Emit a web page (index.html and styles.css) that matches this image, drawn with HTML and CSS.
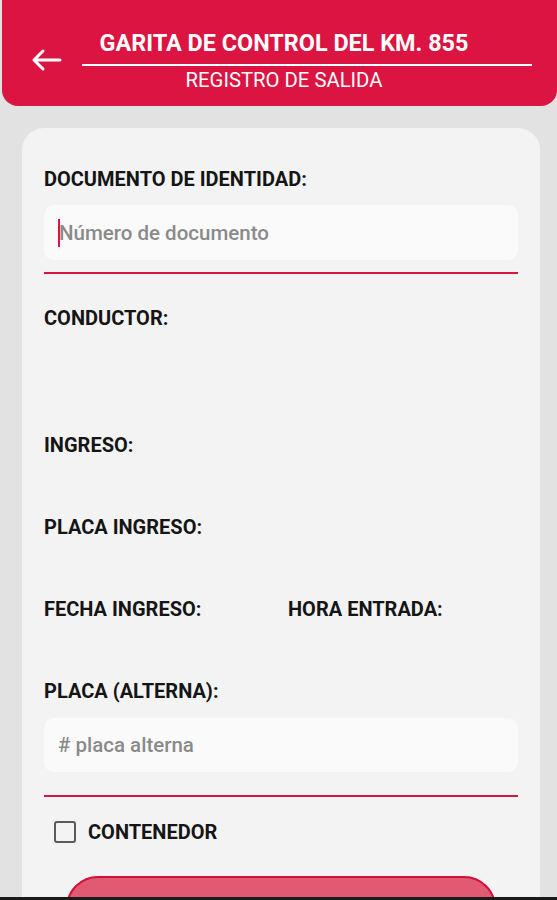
FILE: index.html
```html
<!DOCTYPE html>
<html lang="es">
<head>
<meta charset="utf-8">
<title>Registro de salida</title>
<link rel="stylesheet" href="styles.css">
</head>
<body>
<div class="screen">
  <div class="topbar">
    <a class="back" href="#">
      <svg width="32" height="24" viewBox="0 0 32 24"><path d="M30 12H4M13 3L4 12l9 9" fill="none" stroke="#fff" stroke-width="3" stroke-linecap="round" stroke-linejoin="round"/></svg>
    </a>
    <div class="titles">
      <div class="title">GARITA DE CONTROL DEL KM. 855</div>
      <div class="subtitle">REGISTRO DE SALIDA</div>
    </div>
  </div>

  <form class="card" name="Salida">
    <div class="label first">DOCUMENTO DE IDENTIDAD:</div>
    <div class="field"><span class="caret"></span><input type="text" name="documento" placeholder="Número de documento"></div>
    <div class="rule"></div>

    <div class="label conductor">CONDUCTOR:</div>
    <div class="label ingreso">INGRESO:</div>
    <div class="label row">PLACA INGRESO:</div>
    <div class="label row pair"><span>FECHA INGRESO:</span><span>HORA ENTRADA:</span></div>
    <div class="label row">PLACA (ALTERNA):</div>
    <div class="field alt"><input type="text" name="placa" placeholder="# placa alterna"></div>
    <div class="rule alt"></div>

    <label class="check"><span class="box"></span>CONTENEDOR</label>
    <div class="button"></div>
  </form>
  <div class="navbar"></div>
</div>
</body>
</html>
```

FILE: styles.css
```css
body {margin:0;background:#e2e2e2;font-family:Roboto,"Liberation Sans",sans-serif;color:#151515;}
.screen {height:900px;overflow:hidden;}

.topbar {margin-left:2px;height:106px;background:#db1441;border-radius:0 0 16px 16px;display:flex;align-items:center;}
.back {display:flex;margin-left:28px;margin-top:14px;}
.titles {margin-left:20px;width:450px;color:#fff;margin-top:14px;}
.title {font-size:23.4px;font-weight:bold;text-align:center;padding-right:46px;height:28px;line-height:28px;}
.subtitle {font-size:20.3px;text-align:center;padding-right:46px;border-top:2px solid #fff;margin-top:7px;padding-top:2px;line-height:24px;}

.card {margin:22px 17px 0 22px;background:#f3f3f3;border-radius:22px;padding:41px 22px 0 22px;display:flex;flex-direction:column;}
.label {font-size:20px;font-weight:bold;line-height:20px;height:20px;}
.field {margin-top:16px;height:55px;background:#fafafa;border-radius:10px;display:flex;align-items:center;padding-left:14px;}
.field input {border:none;background:transparent;outline:none;font-family:Roboto,"Liberation Sans",sans-serif;font-size:20.5px;font-weight:500;color:#222;padding:0;flex:1;}
.field input::placeholder {color:#8a8a8a;}
.caret {width:2px;height:28px;background:#e0143e;margin-right:-1px;}
.rule {margin-top:12px;height:2px;background:#d8163f;}
.conductor {margin-top:34px;}
.ingreso {margin-top:107px;}
.row {margin-top:62px;}
.pair {display:grid;grid-template-columns:244px 1fr;}
.field.alt {margin-top:17px;height:54px;}
.rule.alt {margin-top:23px;}

.check {margin-top:24px;display:flex;align-items:center;font-size:20px;font-weight:bold;padding-left:10px;height:22px;}
.box {width:18px;height:18px;border:2px solid #5a5a5a;border-radius:3px;margin-right:12px;}
.button {margin:33px 22px 0 22px;height:60px;background:#e25a72;border:2px solid #d0103a;border-radius:32px;}

.navbar {position:fixed;left:0;right:0;bottom:0;height:3px;background:#1a1a1a;}
```
